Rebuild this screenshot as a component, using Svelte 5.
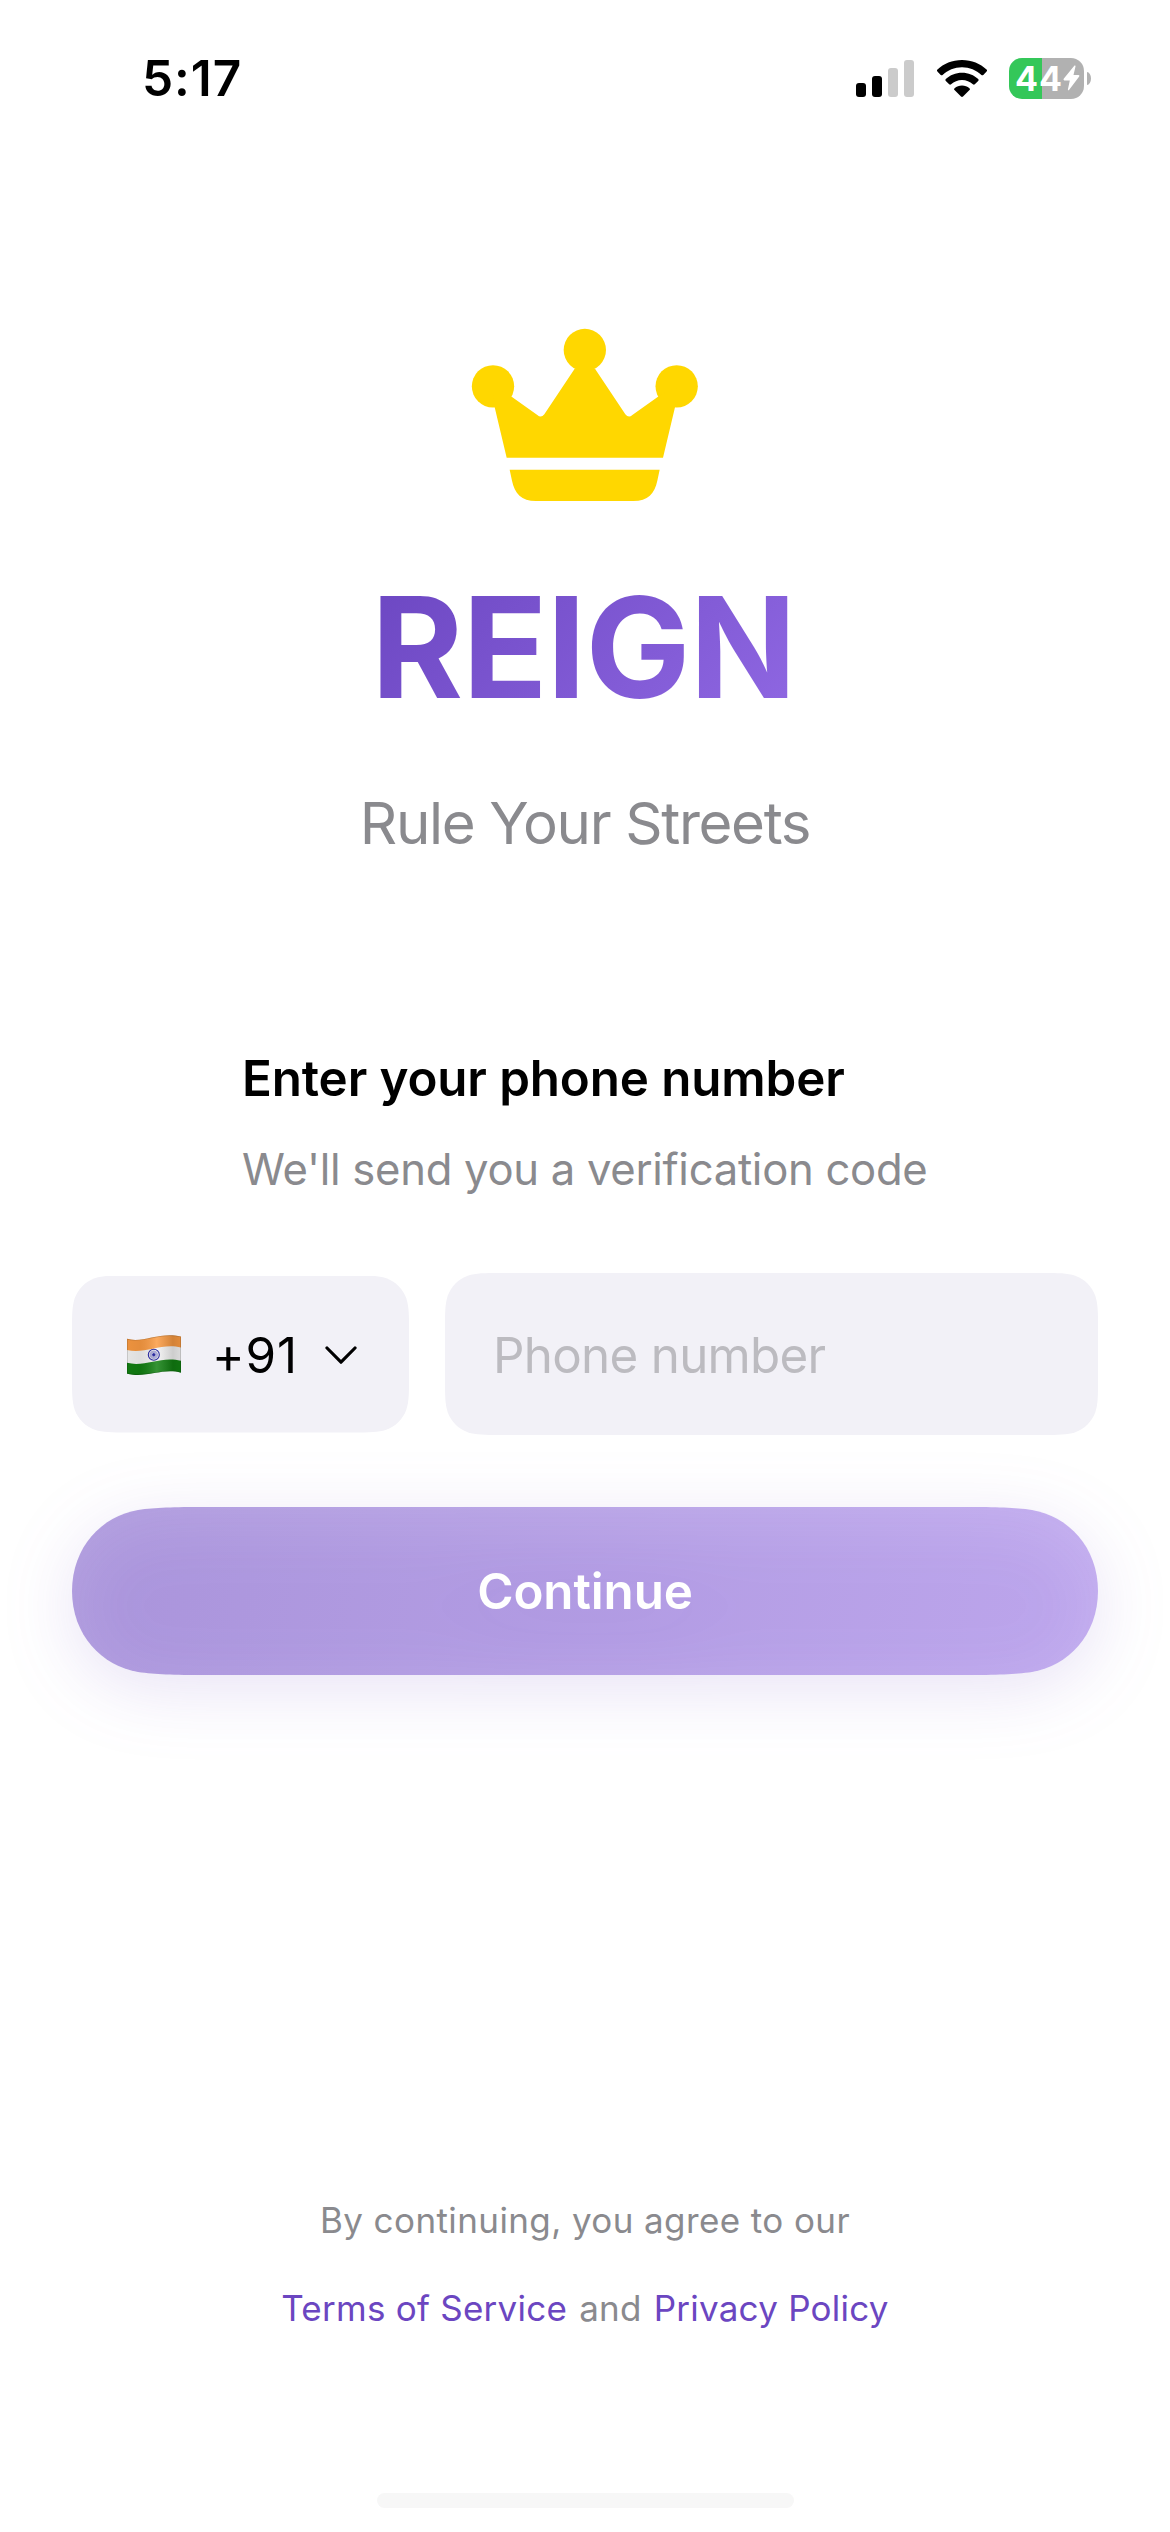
<script>
  // Rounded rectangle whose corners ease into the straight edges.
  function smoothRect(w, h, r) {
    const a = 1.528665 * r, b = 1.088493 * r, c = 0.868407 * r;
    const d = 0.631494 * r, e = 0.074911 * r, f = 0.372824 * r, g = 0.16906 * r;
    return (
      `M${a} 0H${w - a}C${w - b} 0 ${w - c} 0 ${w - d} ${e}` +
      `C${w - f} ${g} ${w - g} ${f} ${w - e} ${d}C${w} ${c} ${w} ${b} ${w} ${a}` +
      `V${h - a}C${w} ${h - b} ${w} ${h - c} ${w - e} ${h - d}` +
      `C${w - g} ${h - f} ${w - f} ${h - g} ${w - d} ${h - e}` +
      `C${w - c} ${h} ${w - b} ${h} ${w - a} ${h}` +
      `H${a}C${b} ${h} ${c} ${h} ${d} ${h - e}` +
      `C${f} ${h - g} ${g} ${h - f} ${e} ${h - d}C0 ${h - c} 0 ${h - b} 0 ${h - a}` +
      `V${a}C0 ${b} 0 ${c} ${e} ${d}C${g} ${f} ${f} ${g} ${d} ${e}C${c} 0 ${b} 0 ${a} 0Z`
    );
  }

  const codeShape = `path("${smoothRect(337, 157, 36)}")`;
  const inputShape = `path("${smoothRect(653, 162, 36)}")`;
</script>

<div class="screen">
  <header class="status">
    <span class="time">5:17</span>
    <div class="indicators">
      <svg class="signal" viewBox="0 0 58 37" aria-hidden="true">
        <rect x="0" y="23" width="10" height="14" rx="3" />
        <rect x="16" y="16" width="10" height="21" rx="3" />
        <rect class="off" x="32" y="8" width="10" height="29" rx="3" />
        <rect class="off" x="48" y="0" width="10" height="37" rx="3" />
      </svg>
      <svg class="wifi" viewBox="0 0 50 37" aria-hidden="true">
        <path d="M25 0C34.700 0 43.400 3.700 49.500 9.600Q50.500 10.500 49.600 11.500L46.300 14.900Q45.400 15.800 44.400 14.900C39.300 10.200 32.500 7.300 25 7.300S10.700 10.200 5.600 14.900Q4.600 15.800 3.700 14.900L0.400 11.500Q-0.500 10.500 0.500 9.600C6.600 3.700 15.300 0 25 0Z" />
        <path d="M25 12.700C31.300 12.700 37 15.100 41.200 19Q42.200 19.900 41.200 20.900L37.800 24.300Q36.900 25.200 35.900 24.300C33 21.700 29.200 20.100 25 20.100S17 21.700 14.100 24.300Q13.100 25.200 12.200 24.300L8.800 20.900Q7.800 19.900 8.800 19C13 15.100 18.700 12.700 25 12.700Z" />
        <path d="M25 25.500C27.800 25.500 30.400 26.600 32.400 28.200Q33.400 29.100 32.500 30.100L26 36.500Q25 37.400 24 36.500L17.500 30.100Q16.600 29.100 17.600 28.200C19.600 26.600 22.200 25.500 25 25.500Z" />
      </svg>
      <div class="battery">
        <div class="cell">
          <span>44</span>
          <svg class="bolt" viewBox="0 0 17 26" aria-hidden="true">
            <path d="M11.500 0.500Q12.800 0 12.500 1.500L10.500 10H15.500Q17 10.200 16.200 11.600L6.200 24.800Q5 26 4.900 24.400L6.800 15.400H1.300Q0 15.200 0.700 13.800Z" />
          </svg>
        </div>
        <i class="nub"></i>
      </div>
    </div>
  </header>

  <section class="brand">
    <svg class="crown" viewBox="0 0 810 630" aria-hidden="true">
      <circle cx="129" cy="229" r="63.500" />
      <circle cx="404.500" cy="120" r="63.500" />
      <circle cx="680" cy="229" r="63.500" />
      <path d="M134 292L129 229L185 260L262 315Q273 325 283 313L374 176H435L526 313Q536 325 547 315L624 260L680 229L675 292L639 443H170Z" />
      <path d="M179 479H629L622 512C614 550 594 573 550 573H258C214 573 194 550 186 512Z" />
    </svg>
    <h1>REIGN</h1>
    <p class="tagline">Rule Your Streets</p>
  </section>

  <section class="intro">
    <h2>Enter your phone number</h2>
    <p>We'll send you a verification code</p>
  </section>

  <div class="fields">
    <div class="code" style:clip-path={codeShape}>
      <svg class="flag" viewBox="0 0 54 40" aria-hidden="true">
        <defs>
          <clipPath id="cloth">
            <path d="M0 3.800C16 8.500 32 -3.500 54 1.600V37.800C36 32.500 20 43.500 0 38.700Z" />
          </clipPath>
          <linearGradient id="folds">
            <stop offset="0" stop-color="#000" stop-opacity="0.060" />
            <stop offset="0.250" stop-color="#000" stop-opacity="0.090" />
            <stop offset="0.550" stop-color="#fff" stop-opacity="0.150" />
            <stop offset="0.850" stop-color="#000" stop-opacity="0.160" />
            <stop offset="1" stop-color="#000" stop-opacity="0.100" />
          </linearGradient>
        </defs>
        <g clip-path="url(#cloth)">
          <rect width="54" height="40" fill="#f4f4f4" />
          <path d="M0 0H54V12.500C34 7.500 18 19.500 0 15Z" fill="#fb9b42" />
          <path d="M0 27.800C18 32.500 34 20.500 54 25.800V40H0Z" fill="#128012" />
          <rect width="54" height="40" fill="url(#folds)" />
          <path d="M0 3.800C16 8.500 32 -3.500 54 1.600V37.800C36 32.500 20 43.500 0 38.700Z" fill="none" stroke="#000" stroke-opacity="0.180" stroke-width="1.500" />
        </g>
        <g fill="none" stroke="#2b2ba0">
          <circle cx="26.800" cy="19.800" r="5.500" stroke-width="1.100" />
          <circle cx="26.800" cy="19.800" r="3" stroke-width="2.600" stroke-opacity="0.350" />
          <circle cx="26.800" cy="19.800" r="1.200" fill="#2b2ba0" />
        </g>
      </svg>
      <span>+91</span>
      <svg class="chevron" viewBox="0 0 32 20" aria-hidden="true">
        <path d="M2 3L16 17.200L30 3" />
      </svg>
    </div>
    <div class="number" style:clip-path={inputShape}>Phone number</div>
  </div>

  <div class="glow">
    <div class="continue">Continue</div>
  </div>

  <footer>
    <p>By continuing, you agree to our</p>
    <p class="links"><a href="#terms">Terms of Service</a><span>and</span><a href="#privacy">Privacy Policy</a></p>
  </footer>

  <div class="home"></div>
</div>

<style>
  :global(body) {
    margin: 0;
    background: #fff;
  }

  .screen {
    width: 1170px;
    height: 2532px;
    display: flex;
    flex-direction: column;
    overflow: hidden;
    background: #fff;
    color: #000;
    font-family: Inter, "Liberation Sans", sans-serif;
  }

  h1, h2, p {
    margin: 0;
  }

  svg {
    display: block;
    flex: none;
  }

  .status {
    height: 156px;
    flex: none;
    box-sizing: border-box;
    padding: 0 79px 0 142px;
    display: flex;
    align-items: center;
    justify-content: space-between;
  }

  .time {
    font-size: 49.5px;
    font-weight: 600;
    letter-spacing: 0.95px;
  }

  .indicators {
    display: flex;
    align-items: center;
  }

  .signal {
    width: 58px;
    height: 37px;
    margin-right: 22.5px;
  }

  .signal .off {
    fill: #cbcbcb;
  }

  .wifi {
    width: 50px;
    height: 37px;
    margin-right: 22.5px;
  }

  .battery {
    display: flex;
    align-items: center;
    gap: 3px;
  }

  .cell {
    width: 75px;
    height: 41px;
    box-sizing: border-box;
    padding-left: 6px;
    display: flex;
    align-items: center;
    border-radius: 13px;
    background: linear-gradient(90deg, #34c759 33px, #b1b1b1 33px);
    color: #fff;
    font-size: 34px;
    font-weight: 700;
    line-height: 41px;
    letter-spacing: 1px;
  }

  .bolt {
    width: 17px;
    height: 26px;
    fill: #fff;
  }

  .nub {
    width: 4px;
    height: 13px;
    border-radius: 0 4px 4px 0 / 0 6.5px 6.5px 0;
    background: #b1b1b1;
  }

  .brand {
    margin-top: 154px;
    display: flex;
    flex-direction: column;
    align-items: center;
  }

  .crown {
    width: 270px;
    height: 210px;
    fill: #ffd700;
  }

  h1 {
    margin: 42px 3px 0 0;
    font-size: 140px;
    font-weight: 700;
    line-height: 170px;
    letter-spacing: -0.74px;
    color: transparent;
    background: linear-gradient(135deg, #6b46c1, #9068e3);
    background-clip: text;
    -webkit-background-clip: text;
  }

  .tagline {
    margin-top: 55px;
    font-size: 58.2px;
    line-height: 72px;
    letter-spacing: -1.34px;
    color: #8a8a8e;
  }

  .intro {
    margin: 189px 0 0 242px;
  }

  h2 {
    font-size: 49.3px;
    font-weight: 600;
    line-height: 60px;
    letter-spacing: -0.11px;
  }

  .intro p {
    margin-top: 35px;
    font-size: 43.6px;
    line-height: 54px;
    letter-spacing: -0.28px;
    color: #8a8a8e;
  }

  .fields {
    margin: 76px 72px 0;
    display: flex;
    align-items: center;
    justify-content: space-between;
    font-size: 49.3px;
  }

  .code {
    width: 337px;
    height: 157px;
    box-sizing: border-box;
    padding: 2px 0 0 55px;
    display: flex;
    align-items: center;
    background: #f2f1f7;
    letter-spacing: 0.91px;
  }

  .flag {
    width: 54px;
    height: 40px;
    margin-right: 31px;
  }

  .chevron {
    width: 32px;
    height: 20px;
    margin-left: 27px;
    fill: none;
    stroke: #000;
    stroke-width: 3.2;
    stroke-linecap: round;
    stroke-linejoin: round;
  }

  .number {
    width: 653px;
    height: 162px;
    box-sizing: border-box;
    padding-left: 48px;
    background: #f2f1f7;
    color: #bcbbc0;
    line-height: 164px;
    letter-spacing: -0.7px;
  }

  .glow {
    margin: 72px 72px 0;
    filter: drop-shadow(0 15px 34px rgba(107, 70, 193, 0.3));
  }

  .continue {
    height: 168px;
    background: linear-gradient(100deg, rgba(107, 70, 193, 0.5), rgba(144, 104, 227, 0.5));
    clip-path: path("M134 0H892C926 0 942 0.4 960 3C996 9 1026 40 1026 84C1026 128 996 159 960 165C942 167.6 926 168 892 168H134C100 168 84 167.6 66 165C30 159 0 128 0 84C0 40 30 9 66 3C84 0.4 100 0 134 0Z");
    color: #fff;
    font-size: 49.3px;
    font-weight: 600;
    line-height: 168px;
    letter-spacing: -0.09px;
    text-align: center;
  }

  footer {
    margin-top: 501px;
    color: #8a8a8e;
    font-size: 35px;
    line-height: 88px;
    letter-spacing: 0.4px;
    text-align: center;
  }

  .links {
    display: flex;
    justify-content: center;
    gap: 12px;
    letter-spacing: 0.25px;
  }

  a {
    color: #6b46c1;
    text-decoration: none;
  }

  .home {
    width: 417px;
    height: 15px;
    margin: 141px auto 0;
    border-radius: 8px;
    background: #f7f7f7;
  }
</style>
